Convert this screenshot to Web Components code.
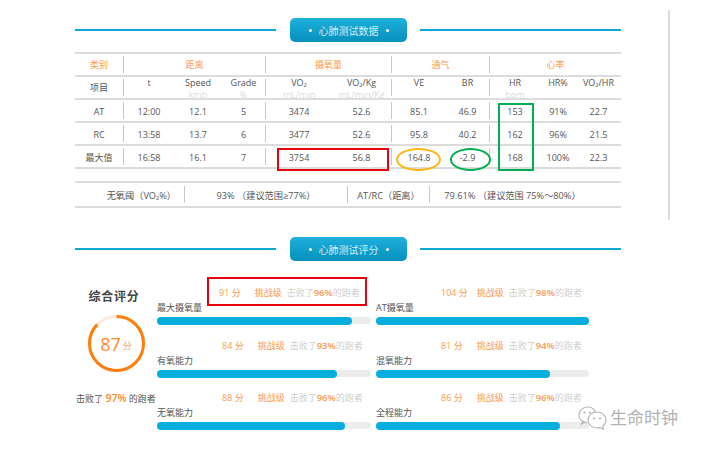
<!DOCTYPE html>
<html>
<head>
<meta charset="utf-8">
<style>
  html,body{margin:0;background:#fff}
  body{width:702px;height:450px;overflow:hidden;font-family:"Open Sans","Noto Sans CJK SC",sans-serif;color:#555}
</style>
</head>
<body>
<report-page>
  <section-title style="margin-top:18px">心肺测试数据</section-title>
  <data-table></data-table>
  <threshold-row></threshold-row>
  <section-title style="margin-top:29px">心肺测试评分</section-title>
  <score-panel></score-panel>
</report-page>
<script>
class ReportPage extends HTMLElement {
  constructor() {
    super();
    this.attachShadow({ mode: "open" });
    this.shadowRoot.innerHTML = `
      <style>
        :host{display:block;position:relative;width:702px;height:450px;box-sizing:border-box;padding:0 81px 0 75px;overflow:hidden}
        .rail{position:absolute;left:668px;top:10px;width:2px;height:210px;background:#dcdcdc}
        .mark{position:absolute;left:578px;top:405px;display:flex;align-items:center;gap:3px;color:#b2b2b2;font-size:17px;line-height:26px;white-space:nowrap}
      </style>
      <slot></slot>
      <div class="rail"></div>
      <div class="mark">
        <svg width="29" height="24" viewBox="0 0 29 24" fill="none" stroke="#b4b4b4" stroke-width="1.1">
          <path d="M9 17C4.500 16 1 13 1 9c0-4.400 3.800-8 8.500-8 3.800 0 7 2.300 8 5.500"/>
          <path d="M5 14.500 3.500 18 8 16"/>
          <path d="M19 6c-5 0-9 3.500-9 8s4 8 9 8c1 0 2-.1 3-.5l3.500 1.800-.8-3.200c2-1.500 3.300-3.600 3.300-6.100 0-4.500-4-8-9-8z" fill="#fff"/>
          <circle cx="6.500" cy="6.500" r="1.100" fill="#b4b4b4" stroke="none"/>
          <circle cx="12" cy="6.500" r="1.100" fill="#b4b4b4" stroke="none"/>
          <circle cx="16" cy="12.500" r="1.100" fill="#b4b4b4" stroke="none"/>
          <circle cx="22" cy="12.500" r="1.100" fill="#b4b4b4" stroke="none"/>
        </svg>
        <span>生命时钟</span>
      </div>`;
  }
}

class SectionTitle extends HTMLElement {
  constructor() {
    super();
    this.attachShadow({ mode: "open" });
    this.shadowRoot.innerHTML = `
      <style>
        :host{display:flex;align-items:center;height:24px}
        .line{flex:1;height:2px;background:#0ea7d8}
        .pill{width:117px;height:24px;margin:0 13px 0 14px;box-sizing:border-box;border-radius:5px;background:linear-gradient(#1fb0dc,#0590bd);
          color:#cfeef8;font-size:10px;display:flex;align-items:center;justify-content:center;gap:7px;white-space:nowrap}
        .pill i{width:3px;height:3px;border-radius:50%;background:#fff}
      </style>
      <div class="line"></div>
      <div class="pill"><i></i><slot></slot><i></i></div>
      <div class="line"></div>`;
  }
}

class DataTable extends HTMLElement {
  constructor() {
    super();
    this.attachShadow({ mode: "open" });
    const widths = [49, 50, 48, 44, 66, 60, 54, 44, 50, 36, 45];
    const sepAfter = [0, 3, 5, 7];
    const groups = [["类别", 49], ["距离", 142], ["摄氧量", 126], ["通气", 98], ["心率", 131]];
    const heads = [["t", ""], ["Speed", "kmh"], ["Grade", "%"], ["VO₂", "mL/min"], ["VO₂/Kg", "mL/min/Kg"],
      ["VE", ""], ["BR", ""], ["HR", "bpm"], ["HR%", ""], ["VO₂/HR", ""]];
    const rows = [
      ["AT", "12:00", "12.1", "5", "3474", "52.6", "85.1", "46.9", "153", "91%", "22.7"],
      ["RC", "13:58", "13.7", "6", "3477", "52.6", "95.8", "40.2", "162", "96%", "21.5"],
      ["最大值", "16:58", "16.1", "7", "3754", "56.8", "164.8", "-2.9", "168", "100%", "22.3"],
    ];
    const cell = (w, html, cls) => `<div class="c ${cls}" style="width:${w}px">${html}</div>`;
    const sep = (i) => (sepAfter.includes(i) ? "sep" : "");
    const groupRow = groups.map((g, i) => cell(g[1], g[0], "g " + (i < 4 ? "sep" : ""))).join("");
    const headRow = cell(49, "项目", "sep") + heads.map((h, i) =>
      cell(widths[i + 1], `<span class="n">${h[0]}</span><span class="u">${h[1]}</span>`, "h " + sep(i + 1))).join("");
    const dataRows = rows.map(r =>
      `<div class="row d">${r.map((v, i) => cell(widths[i], v, sep(i))).join("")}</div>`).join("");
    this.shadowRoot.innerHTML = `
      <style>
        :host{display:block;position:relative;margin-top:10px;border-top:2px solid #dcdcdc;font-size:9px;color:#555}
        .row{display:flex;align-items:center;height:23px;box-sizing:border-box;border-bottom:2px solid #dcdcdc}
        .c{box-sizing:border-box;height:17px;display:flex;flex-direction:column;align-items:center;justify-content:center;line-height:10px;white-space:nowrap}
        .h{justify-content:flex-start}
        .n{margin-top:-1px}
        .d .c{padding-top:2px}
        .sep{border-right:1px solid #c8c8c8}
        .g{color:#fb9a4f}
        .u{color:#dcdcdc;height:10px;margin-top:2.400px}
        .box{position:absolute;box-sizing:border-box}
        .red{left:202px;top:94px;width:112px;height:23px;border:2px solid #e8000f}
        .green{left:423px;top:49px;width:36px;height:68px;border:2px solid #04ad51}
        .oval{height:23px;border-radius:50%;top:94px}
        .o{left:321px;width:45px;border:2px solid #ffb511}
        .e{left:375px;width:41px;border:2px solid #04ad51}
      </style>
      <div class="row">${groupRow}</div>
      <div class="row">${headRow}</div>
      ${dataRows}
      <div class="box red"></div>
      <div class="box green"></div>
      <div class="box oval o"></div>
      <div class="box oval e"></div>`;
  }
}

class ThresholdRow extends HTMLElement {
  constructor() {
    super();
    this.attachShadow({ mode: "open" });
    this.shadowRoot.innerHTML = `
      <style>
        :host{display:flex;align-items:center;margin-top:12px;height:27px;box-sizing:border-box;border-top:2px solid #dcdcdc;border-bottom:2px solid #dcdcdc;font-size:9.200px;color:#555;white-space:nowrap}
        div{height:17px;display:flex;align-items:center;justify-content:center;box-sizing:border-box}
        .s{border-right:1px solid #c8c8c8}
      </style>
      <div class="s" style="width:110px;justify-content:flex-end;padding-right:8px">无氧阈（VO₂%）</div>
      <div class="s" style="width:163px">93% （建议范围≥77%）</div>
      <div class="s" style="width:82px">AT/RC（距离）</div>
      <div style="width:191px;padding-right:26px">79.61% （建议范围 75%～80%）</div>`;
  }
}

class ScoreBar extends HTMLElement {
  constructor() {
    super();
    this.attachShadow({ mode: "open" });
    const a = (n) => this.getAttribute(n);
    this.shadowRoot.innerHTML = `
      <style>
        :host{display:block;height:52.500px}
        .top{display:flex;height:13px;align-items:center;font-size:9px;color:#fb9a4f;white-space:nowrap;padding-left:${a("pad") || 65}px}
        .lvl{margin-left:${a("gap") || 14}px}
        .beat{margin-left:5px;color:#cfcfcf}
        .beat b{font-weight:600;color:#fb9a4f;font-size:9.500px}
        .name{font-size:9px;color:#555;line-height:13px;margin-top:2px}
        .track{height:7px;margin-top:3px;border-radius:4px;background:#ececec}
        .fill{height:8px;border-radius:4px;background:#06aedd;width:${a("fill")}px}
      </style>
      <div class="top"><span>${a("score")} 分</span><span class="lvl">挑战级</span><span class="beat">击败了<b>${a("beat")}%</b>的跑者</span></div>
      <div class="name">${a("name")}</div>
      <div class="track"><div class="fill"></div></div>`;
  }
}

class ScorePanel extends HTMLElement {
  constructor() {
    super();
    this.attachShadow({ mode: "open" });
    const r = 27, c = 2 * Math.PI * r;
    this.shadowRoot.innerHTML = `
      <style>
        :host{display:flex;position:relative;margin-top:16px}
        .side{width:82px;display:flex;flex-direction:column;align-items:center;padding-top:12px;color:#555}
        .t{font-size:12px;font-weight:700;letter-spacing:.8px;color:#444;line-height:16px;margin-right:4px}
        .ring{position:relative;width:57px;height:57px;margin-top:10px}
        .ring svg{display:block;transform:rotate(-90deg)}
        .v{position:absolute;inset:0;display:flex;align-items:center;justify-content:center;color:#ff8a2a;font-size:18px;gap:2px}
        .v small{font-size:9px;color:#f9a25e;margin-top:4px}
        .beat{font-size:9px;line-height:14px;margin-top:19px;white-space:nowrap}
        .beat b{color:#ff8a1f;font-size:10.500px;font-weight:600}
        .grid{display:grid;grid-template-columns:214px 213px;column-gap:5px;padding-top:9px}
        .hl{position:absolute;left:132px;top:0;width:160px;height:29px;box-sizing:border-box;border:2px solid #e8000f}
      </style>
      <div class="side">
        <div class="t">综合评分</div>
        <div class="ring">
          <svg width="57" height="57" viewBox="0 0 57 57">
            <circle cx="28.500" cy="28.500" r="${r}" fill="none" stroke="#fdebdd" stroke-width="3"/>
            <circle cx="28.500" cy="28.500" r="${r}" fill="none" stroke="#ff7d0a" stroke-width="3" stroke-dasharray="${0.87 * c} ${c}"/>
          </svg>
          <div class="v"><span>87</span><small>分</small></div>
        </div>
        <div class="beat">击败了 <b>97%</b> 的跑者</div>
      </div>
      <div class="grid">
        <score-bar score="91" beat="96" name="最大摄氧量" fill="195" pad="62"></score-bar>
        <score-bar score="104" beat="98" name="AT摄氧量" fill="213" gap="9"></score-bar>
        <score-bar score="84" beat="93" name="有氧能力" fill="180"></score-bar>
        <score-bar score="81" beat="94" name="混氧能力" fill="174"></score-bar>
        <score-bar score="88" beat="96" name="无氧能力" fill="188"></score-bar>
        <score-bar score="86" beat="96" name="全程能力" fill="184"></score-bar>
      </div>
      <div class="hl"></div>`;
  }
}

customElements.define("report-page", ReportPage);
customElements.define("section-title", SectionTitle);
customElements.define("data-table", DataTable);
customElements.define("threshold-row", ThresholdRow);
customElements.define("score-bar", ScoreBar);
customElements.define("score-panel", ScorePanel);
</script>
</body>
</html>
